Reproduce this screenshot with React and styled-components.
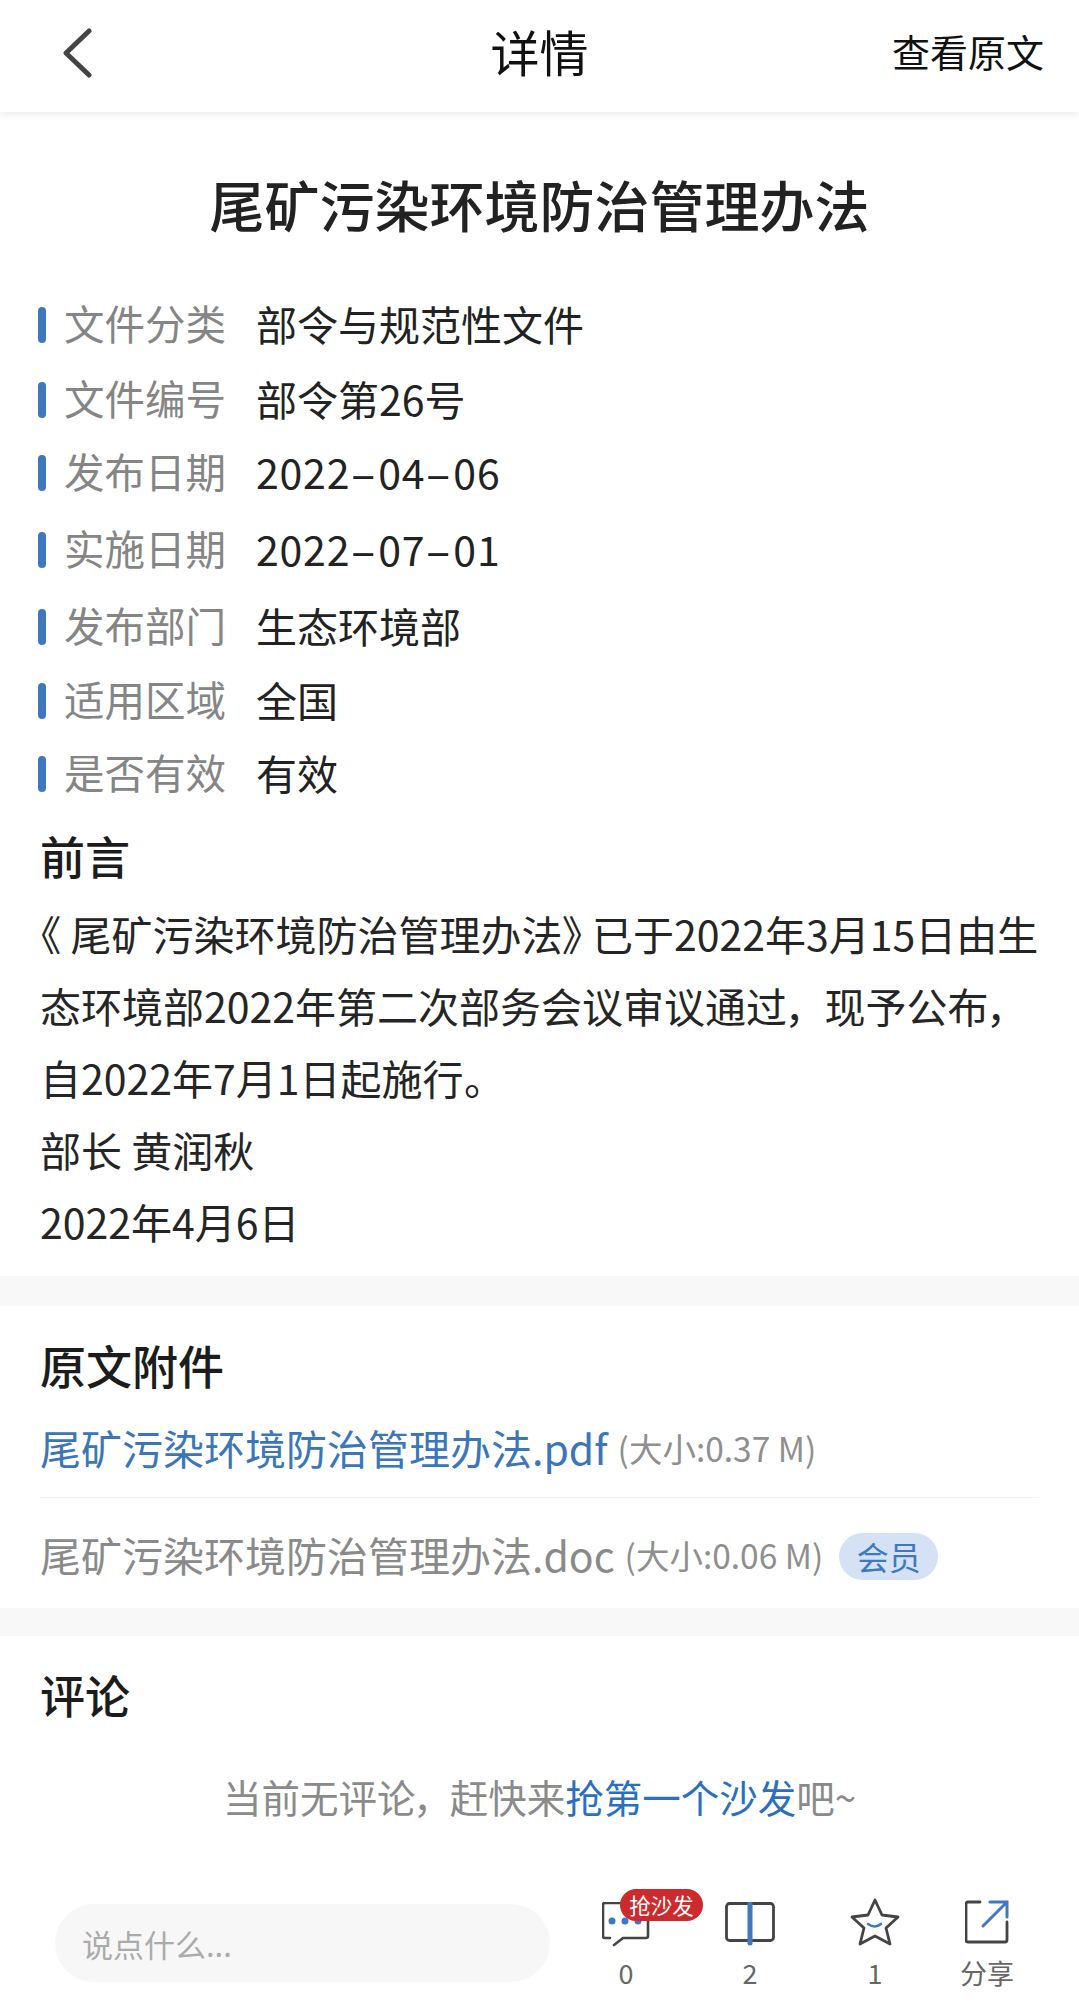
import React from 'react';
import styled, { createGlobalStyle } from 'styled-components';

const GlobalStyle = createGlobalStyle`
  html,body{
    margin:0;
    padding:0;
    background:#fff;
  }
  body{
    font-family:"Noto Sans CJK SC","Noto Sans",sans-serif;
    color:#222;
    font-feature-settings:"palt";
  }
  *{
    box-sizing:border-box;
  }
`;

const Page = styled.div`
  width:1079px;
  height:2009px;
  overflow:hidden;
  background:#fff;
`;

const Header = styled.header`
  height:112px;
  padding:0 35px 6px;
  display:grid;
  grid-template-columns:1fr auto 1fr;
  align-items:center;
  box-shadow:0 2px 8px rgba(0,0,0,0.09);
  svg{
    margin-left:27px;
  }
  .title{
    margin-bottom:4px;
    font-size:49px;
    line-height:60px;
    color:#111;
  }
  .action{
    justify-self:end;
    margin-bottom:4px;
    font-size:38px;
    line-height:50px;
    color:#111;
  }
`;

const Section = styled.section`
  padding:${props => props.$top}px 40px ${props => props.$bottom}px;
`;

const Title = styled.h1`
  height:80px;
  margin:0 0 55px;
  font-size:55px;
  line-height:76px;
  font-weight:500;
  text-align:center;
  color:#222;
`;

const InfoRow = styled.div`
  display:flex;
  align-items:center;
  height:50px;
  margin-top:${props => props.$gap}px;
  &::before{
    content:'';
    width:8px;
    height:36px;
    margin-left:-2px;
    margin-right:18px;
    border-radius:4px;
    background:#3f78c0;
  }
  .label{
    width:192px;
    height:50px;
    font-size:40.5px;
    line-height:46px;
    color:#858585;
  }
  .value{
    height:50px;
    font-size:41px;
    line-height:46px;
    color:#222;
  }
`;

const DateText = styled.span`
  letter-spacing:0.8px;
  .dash{
    display:inline-block;
    width:28px;
    text-align:center;
    transform:scaleX(1.9);
  }
`;

const SubTitle = styled.h2`
  height:60px;
  margin:${props => props.$top || 0}px 0 0;
  font-size:${props => props.$size || 45}px;
  line-height:54px;
  font-weight:500;
  color:#1c1c1c;
`;

const Paragraph = styled.p`
  margin:8px 0 0;
  font-size:41px;
  line-height:72px;
  color:#252525;
  white-space:nowrap;
`;

// palt 把标点压得太窄，这里补回一点间距
const Punct = styled.span`
  margin-right:${props => props.$gap}px;
`;

const Band = styled.div`
  height:${props => props.$height}px;
  background:#f8f8f8;
`;

const FileRow = styled.div`
  display:flex;
  align-items:center;
  height:${props => props.$height}px;
  padding-top:${props => props.$pad || 0}px;
  font-size:41px;
  color:${props => (props.$active ? '#3a76b8' : '#8a8a8a')};
  border-bottom:${props => (props.$line ? '1px solid #f3f3f3' : 'none')};
  .size{
    margin-left:10px;
    font-size:33.5px;
    color:#8f8f8f;
  }
`;

const VipTag = styled.span`
  display:flex;
  align-items:center;
  justify-content:center;
  width:99px;
  height:47px;
  margin-left:16px;
  margin-top:4px;
  border-radius:24px;
  background:#d5e2f5;
  color:#3f78c0;
  font-size:32px;
`;

const EmptyText = styled.div`
  height:60px;
  margin-top:40px;
  font-size:38.5px;
  line-height:56px;
  text-align:center;
  color:#8a8a8a;
  .link{
    color:#2a6fc0;
  }
`;

const BottomBar = styled.div`
  display:flex;
  align-items:flex-start;
  margin-top:61px;
  padding-left:55px;
`;

const InputBox = styled.div`
  width:495px;
  height:78px;
  margin-top:15px;
  margin-right:14px;
  padding-left:27px;
  display:flex;
  align-items:center;
  border-radius:39px;
  background:#f7f7f7;
  color:#ababab;
  font-size:31px;
`;

const Actions = styled.div`
  display:grid;
  grid-template-columns:124px 124px 126px 98px;
`;

const ActionItem = styled.div`
  position:relative;
  height:100px;
  svg{
    position:absolute;
    left:50%;
    top:${props => props.$iconTop}px;
    transform:translateX(-50%);
  }
  .text{
    position:absolute;
    left:0;
    right:0;
    top:66px;
    text-align:center;
    font-size:27px;
    line-height:36px;
    color:#666;
  }
`;

const Badge = styled.span`
  position:absolute;
  left:56px;
  top:0;
  width:83px;
  height:32px;
  display:flex;
  align-items:center;
  justify-content:center;
  border-radius:16px;
  background:#cc2a2d;
  color:#fff;
  font-size:21.5px;
  line-height:32px;
`;

const infoRows = [
  { label:'文件分类', value:'部令与规范性文件', gap:0 },
  { label:'文件编号', value:'部令第26号', gap:25 },
  { label:'发布日期', date:['2022','04','06'], gap:23 },
  { label:'实施日期', date:['2022','07','01'], gap:27 },
  { label:'发布部门', value:'生态环境部', gap:27 },
  { label:'适用区域', value:'全国', gap:24 },
  { label:'是否有效', value:'有效', gap:23 },
];

function DateValue({ parts }){
  return(
    <DateText>
      {parts[0]}<span className='dash'>-</span>{parts[1]}<span className='dash'>-</span>{parts[2]}
    </DateText>
  )
}

function BackIcon(){
  return(
    <svg width="30" height="50" viewBox="0 0 30 50" fill="none">
      <path d="M27 3 L4 25 L27 47" stroke="#444" strokeWidth="5" strokeLinecap="round" strokeLinejoin="round" />
    </svg>
  )
}

function ChatIcon(){
  return(
    <svg width="48" height="46" viewBox="0 0 48 46" fill="none">
      <path d="M8 36 H3 a2 2 0 0 1 -2 -2 V3 a2 2 0 0 1 2 -2 H44 a2 2 0 0 1 2 2 V34 a2 2 0 0 1 -2 2 H21 L12 43" stroke="#444" strokeWidth="2.6" strokeLinecap="round" strokeLinejoin="round" />
      <circle cx="10" cy="19" r="3.5" fill="#3f78c0" />
      <circle cx="23" cy="19" r="3.5" fill="#3f78c0" />
      <circle cx="36" cy="19" r="3.5" fill="#3f78c0" />
    </svg>
  )
}

function BookIcon(){
  return(
    <svg width="50" height="44" viewBox="0 0 50 44" fill="none">
      <rect x="1.5" y="1.5" width="47" height="37" rx="3" stroke="#444" strokeWidth="2.8" />
      <path d="M25 2 V41" stroke="#3f78c0" strokeWidth="5" strokeLinecap="round" />
    </svg>
  )
}

function StarIcon(){
  return(
    <svg width="50" height="48" viewBox="0 0 50 48" fill="none">
      <path d="M25 2 L32 17 L48 19 L36 30 L40 46 L25 38 L10 46 L14 30 L2 19 L18 17 Z" stroke="#444" strokeWidth="2.8" strokeLinejoin="round" />
      <path d="M18 26 Q25 31 31 26" stroke="#3f78c0" strokeWidth="2.6" strokeLinecap="round" />
    </svg>
  )
}

function ShareIcon(){
  return(
    <svg width="44" height="44" viewBox="0 0 44 44" fill="none">
      <path d="M15 2 H3 a2 2 0 0 0 -2 2 V40 a2 2 0 0 0 2 2 H40 a2 2 0 0 0 2 -2 V22" stroke="#444" strokeWidth="2.8" strokeLinecap="round" />
      <path d="M18 26 L41 3 M25 2 H42 V17" stroke="#3f78c0" strokeWidth="3" strokeLinecap="round" />
    </svg>
  )
}

function App(){
  return(
    <Page>
      <GlobalStyle />
      <Header>
        <BackIcon />
        <div className='title'>详情</div>
        <div className='action'>查看原文</div>
      </Header>

      <Section $top={53} $bottom={19}>
        <Title>尾矿污染环境防治管理办法</Title>
        {infoRows.map(row => (
          <InfoRow key={row.label} $gap={row.gap}>
            <div className='label'>{row.label}</div>
            <div className='value'>{row.date ? <DateValue parts={row.date} /> : row.value}</div>
          </InfoRow>
        ))}
        <SubTitle $top={30}>前言</SubTitle>
        <Paragraph>
          <Punct $gap={10}>《</Punct>尾矿污染环境防治管理办法<Punct $gap={9}>》</Punct>已于2022年3月15日由生<br />
          态环境部2022年第二次部务会议审议通过<Punct $gap={17}>，</Punct>现予公布，<br />
          自2022年7月1日起施行。<br />
          部长 黄润秋<br />
          2022年4月6日
        </Paragraph>
      </Section>

      <Band $height={30} />

      <Section $top={31} $bottom={0}>
        <SubTitle $size={46}>原文附件</SubTitle>
        <FileRow $height={101} $active $line>
          尾矿污染环境防治管理办法.pdf<span className='size'>(大小:0.37 M)</span>
        </FileRow>
        <FileRow $height={110} $pad={2}>
          尾矿污染环境防治管理办法.doc<span className='size'>(大小:0.06 M)</span>
          <VipTag>会员</VipTag>
        </FileRow>
      </Section>

      <Band $height={28} />

      <Section $top={32} $bottom={0}>
        <SubTitle>评论</SubTitle>
        <EmptyText>当前无评论<Punct $gap={15}>，</Punct>赶快来<span className='link'>抢第一个沙发</span>吧~</EmptyText>
      </Section>

      <BottomBar>
        <InputBox>说点什么...</InputBox>
        <Actions>
          <ActionItem $iconTop={13}>
            <ChatIcon />
            <Badge>抢沙发</Badge>
            <div className='text'>0</div>
          </ActionItem>
          <ActionItem $iconTop={13}>
            <BookIcon />
            <div className='text'>2</div>
          </ActionItem>
          <ActionItem $iconTop={9}>
            <StarIcon />
            <div className='text'>1</div>
          </ActionItem>
          <ActionItem $iconTop={11}>
            <ShareIcon />
            <div className='text'>分享</div>
          </ActionItem>
        </Actions>
      </BottomBar>
    </Page>
  )
}

export default App;
